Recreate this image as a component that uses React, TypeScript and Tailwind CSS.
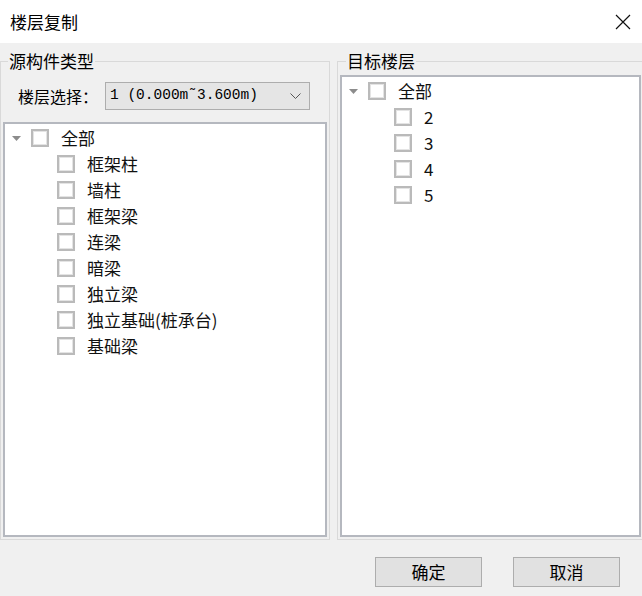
import React from 'react'

const SOURCE_TYPES = ['框架柱', '墙柱', '框架梁', '连梁', '暗梁', '独立梁', '独立基础(桩承台)', '基础梁']
const FLOORS = ['2', '3', '4', '5']

function Checkbox() {
  return (
    <span className="block w-[18px] h-[18px] shrink-0 border-2 border-[#bababa] bg-white shadow-[inset_0_0_0_1px_#e4e4e4]" />
  )
}

function Caret() {
  return (
    <svg width="9" height="5" viewBox="0 0 9 5" className="shrink-0">
      <polygon points="0,0 9,0 4.5,5" fill="#8c8c8c" />
    </svg>
  )
}

function Tree({ items }: { items: string[] }) {
  return (
    <div className="pt-[1px] text-[17px] leading-[22px] text-[#111]">
      {/* root node */}
      <div className="h-[26px] flex items-center pl-[7px]">
        <Caret />
        <span className="ml-[10px]">
          <Checkbox />
        </span>
        <span className="ml-[12px]">全部</span>
      </div>
      {items.map((item) => (
        <div key={item} className="h-[26px] flex items-center pl-[52px]">
          <Checkbox />
          <span className="ml-[12px]">{item}</span>
        </div>
      ))}
    </div>
  )
}

export default function App() {
  return (
    <div
      className="w-[642px] h-[596px] overflow-hidden bg-[#f0f0f0] text-black"
      style={{ fontFamily: '"Noto Sans CJK SC", "Noto Sans", sans-serif' }}
    >
      {/* Title bar */}
      <div className="h-[43px] bg-white flex items-center justify-between pl-[10px] pr-[11px]">
        <span className="text-[17px] leading-[22px] mt-[1px]">楼层复制</span>
        <svg width="16" height="16" viewBox="0 0 16 16" className="mt-[1px]">
          <path d="M1 1 L15 15 M15 1 L1 15" stroke="#111" strokeWidth="1.2" />
        </svg>
      </div>

      <div className="flex mt-[7px]">
        {/* Source types */}
        <fieldset className="w-[330px] shrink-0 border border-[#d9d9d9] pl-[2px] pr-[2px] pb-[2px]">
          <legend className="ml-[5px] px-[1px] text-[17px] leading-[22px]">源构件类型</legend>
          <div className="flex items-center mt-[10px]">
            <span className="w-[102px] pl-[15px] text-[16px] leading-[22px]">楼层选择：</span>
            <div className="w-[205px] h-[28px] border border-[#adadad] bg-[#e5e5e5] flex items-center justify-between pl-[4px] pr-[8px]">
              <span className="text-[14.5px]" style={{ fontFamily: '"Liberation Mono", monospace' }}>
                1 (0.000m˜3.600m)
              </span>
              <svg width="11" height="6" viewBox="0 0 11 6">
                <polyline points="0.5,0.5 5.5,5.5 10.5,0.5" fill="none" stroke="#555" strokeWidth="1" />
              </svg>
            </div>
          </div>
          <div className="mt-[12px] h-[415px] border-2 border-[#b5b8bf] bg-white">
            <Tree items={SOURCE_TYPES} />
          </div>
        </fieldset>

        {/* Target floors */}
        <fieldset className="ml-[7px] w-[310px] shrink-0 border border-[#d9d9d9] pl-[2px] pb-[2px]">
          <legend className="ml-[6px] px-[1px] text-[17px] leading-[22px]">目标楼层</legend>
          <div className="mt-[3px] w-[301px] h-[462px] border-2 border-[#b5b8bf] bg-white">
            <Tree items={FLOORS} />
          </div>
        </fieldset>
      </div>

      <div className="flex justify-end gap-[31px] pr-[22px] mt-[17px]">
        <button className="w-[107px] h-[30px] border border-[#adadad] bg-[#e1e1e1] text-[17px] leading-[22px]">确定</button>
        <button className="w-[107px] h-[30px] border border-[#adadad] bg-[#e1e1e1] text-[17px] leading-[22px]">取消</button>
      </div>
    </div>
  )
}
